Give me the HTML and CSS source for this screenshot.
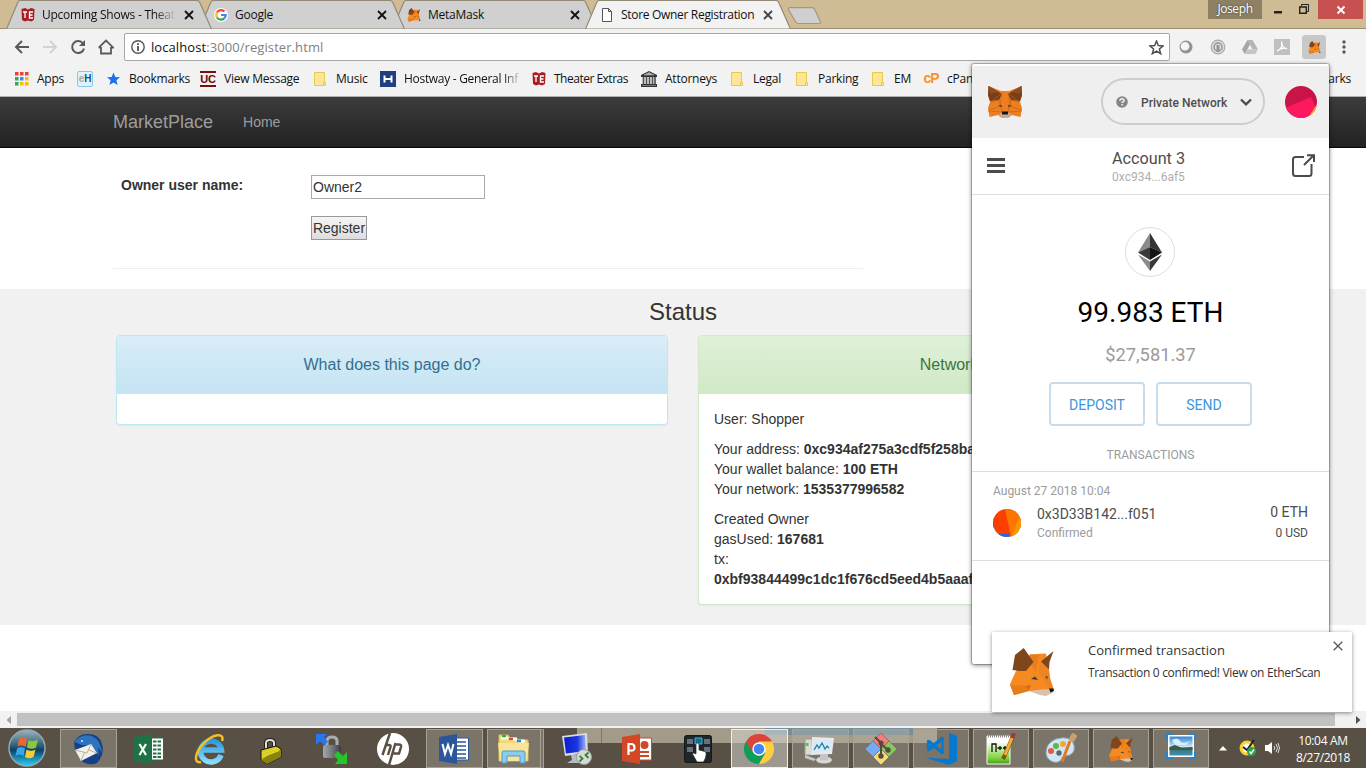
FILE: index.html
```html
<!DOCTYPE html>
<html lang="en">
<head>
<meta charset="utf-8">
<title>Store Owner Registration</title>
<link rel="stylesheet" href="styles.css">
</head>
<body>
<svg class="defs" width="0" height="0" aria-hidden="true">
  <defs>
    <linearGradient id="orb" x1="0" y1="0" x2="0" y2="1"><stop offset="0" stop-color="#9db4bd"/><stop offset=".45" stop-color="#2b5c79"/><stop offset=".55" stop-color="#0b3f66"/><stop offset="1" stop-color="#2bd0f4"/></linearGradient>
    <linearGradient id="ie" x1="0" y1="0" x2="0" y2="1"><stop offset="0" stop-color="#2a9be0"/><stop offset="1" stop-color="#8adcfb"/></linearGradient>
    <linearGradient id="sky" x1="0" y1="0" x2="0" y2="1"><stop offset="0" stop-color="#2f86d6"/><stop offset=".55" stop-color="#cfeafa"/><stop offset=".6" stop-color="#3b6f62"/><stop offset="1" stop-color="#3f91b8"/></linearGradient>
    <linearGradient id="npp" x1="0" y1="0" x2="0" y2="1"><stop offset=".2" stop-color="#fff"/><stop offset=".8" stop-color="#7bd23a"/><stop offset="1" stop-color="#3f9e18"/></linearGradient>
    <linearGradient id="scr" x1="0" y1="0" x2="1" y2="0"><stop offset="0" stop-color="#0a1fd0"/><stop offset=".6" stop-color="#1a35e0"/><stop offset="1" stop-color="#9fb6f5"/></linearGradient>
    <linearGradient id="steel" x1="0" y1="0" x2="1" y2="0"><stop offset="0" stop-color="#a5a8aa"/><stop offset=".6" stop-color="#6b6e70"/><stop offset="1" stop-color="#3a3c3e"/></linearGradient>
  </defs>
  <symbol id="tab" viewBox="0 0 206 29"><path d="M.5 29 11.5 3Q12.500 .5 14 .5H191Q193 .5 194 3L205.500 29Z"/></symbol>
  <symbol id="x" viewBox="0 0 10 10"><path d="M1 1 9 9M9 1 1 9" fill="none" stroke="currentColor" stroke-width="1.800"/></symbol>
  <symbol id="te" viewBox="0 0 14 14"><path d="M.5 1 4 0 7 1.500 10 0 13.500 1 13 12 10 13.500 7 12.500 4 13.500 1 12Z" fill="#a81e23"/><path d="M2 4H6M4 4V10M12 4H8.500V10H12M8.500 7H11.500" stroke="#fff" stroke-width="1.300" fill="none"/></symbol>
  <symbol id="folder" viewBox="0 0 12 14"><path d="M.5 .5H10.500V13.500H.5Z" fill="#ffe694" stroke="#e8c850"/><path d="M9.500 10.500h2v3h-2z" fill="#ffe694" stroke="#e8c850"/></symbol>
  <symbol id="foxside" viewBox="0 0 44 48">
    <path d="M20 6.500 36 5.500 39 22 40 30 43.500 41 34 44 19 43 4 47 0 36 6 23Z" fill="#f6891f"/>
    <path d="M20 6.500 29 6.500 26 24 19 14Z" fill="#e97d1d"/>
    <path d="M30 14 39 22 40 31 43.500 41 38 40 29 24Z" fill="#ea8522"/>
    <path d="M0 37 17 38 19 43 4 47Z" fill="#e67c1c"/>
    <path d="M15 38 21 37 19 42Z" fill="#d86c16"/>
    <path d="M13.700 0 5 7 2.500 22 9 23 16 23 23.500 14Z" fill="#80451b"/>
    <path d="M43.500 3 31 13.500 39 21.500 39.500 14Z" fill="#80451b"/>
    <path d="M19 43 32 41.500 42 41 43 44.500 36 48 30 47Z" fill="#d7c1b3"/>
    <path d="M21 31 25 28.500 28 32Z" fill="#33434d"/><path d="M35 28 37 31.500 38 28.500Z" fill="#7e4217"/><path d="M39 40.500 43.500 40.500 44 43 40.500 44.500Z" fill="#161616"/>
  </symbol>
</svg>

<div class="screen">
  <header class="tabstrip">
    <div class="tab t1"><svg class="shape"><use href="#tab"/></svg><svg class="fav"><use href="#te"/></svg><span class="title fade">Upcoming Shows - Theat</span><svg class="close"><use href="#x"/></svg></div>
    <div class="tab t2"><svg class="shape"><use href="#tab"/></svg>
      <svg class="fav" viewBox="0 0 14 14"><circle cx="7" cy="7" r="7" fill="#fff"/><g fill="none" stroke-width="2.200"><path d="M3 4.500A4.700 4.700 0 0 1 10.500 3.600" stroke="#ea4335"/><path d="M3 4.500A4.700 4.700 0 0 0 3 9.500" stroke="#fbbc05"/><path d="M3 9.500A4.700 4.700 0 0 0 10.200 10.400" stroke="#34a853"/><path d="M7 7H11.700A4.700 4.700 0 0 1 10.200 10.400" stroke="#4285f4"/></g></svg>
      <span class="title">Google</span><svg class="close"><use href="#x"/></svg></div>
    <div class="tab t3"><svg class="shape"><use href="#tab"/></svg><svg class="fav"><use href="#foxside"/></svg><span class="title">MetaMask</span><svg class="close"><use href="#x"/></svg></div>
    <div class="tab t4 active"><svg class="shape"><use href="#tab"/></svg>
      <svg class="fav" viewBox="0 0 14 14"><path d="M2.500 .5H8.500L11.500 3.500V13.500H2.500ZM8.500 .5V3.500H11.500" fill="#fff" stroke="#555"/></svg>
      <span class="title">Store Owner Registration</span><svg class="close"><use href="#x"/></svg></div>
    <svg class="newtab" viewBox="0 0 36 18"><path d="M3 .7H25Q27 .7 28 3L33.500 15Q34 16.500 32 16.500H11Q9 16.500 8 14L1.500 2.500Q1 .7 3 .7Z" fill="#cfcfcf" stroke="#a3977d" stroke-width="1.200"/></svg>
    <div class="window-controls">
      <span class="user">Joseph</span>
      <svg class="wmin" viewBox="0 0 8 3"><path d="M0 0H8V2.500H0Z" fill="#222"/></svg>
      <svg class="wmax" viewBox="0 0 10 10"><path d="M2.500 2V.5H9.500V7.500H8" fill="none" stroke="#222"/><path d="M.7 3H7.300V9.300H.7Z" fill="none" stroke="#222" stroke-width="1.400"/></svg>
      <span class="wclose"><svg viewBox="0 0 10 10"><path d="M1.500 1.500 8.500 8.500M8.500 1.500 1.500 8.500" stroke="#fff" stroke-width="1.900"/></svg></span>
    </div>
  </header>

  <div class="toolbar">
    <svg class="nav" viewBox="0 0 16 16"><path d="M15 8H2M8 2 2 8 8 14" fill="none" stroke="#5a5a5a" stroke-width="2"/></svg>
    <svg class="nav" viewBox="0 0 16 16"><path d="M1 8H14M8 2 14 8 8 14" fill="none" stroke="#d2d2d2" stroke-width="2"/></svg>
    <svg class="nav" viewBox="0 0 16 16"><path d="M13 4.500A6 6 0 1 0 14 9.500" fill="none" stroke="#5a5a5a" stroke-width="2"/><path d="M15 1V7H9Z" fill="#5a5a5a"/></svg>
    <svg class="nav" viewBox="0 0 16 16"><path d="M3 8V14.500H13V8M.7 8.700 8 1.500 15.300 8.700H13M.7 8.700H3" fill="none" stroke="#5a5a5a" stroke-width="1.800"/></svg>
    <div class="omnibox">
      <svg class="info" viewBox="0 0 14 14"><circle cx="7" cy="7" r="6.200" fill="none" stroke="#555" stroke-width="1.400"/><path d="M7 6V11M7 3.200V4.900" stroke="#444" stroke-width="1.700"/></svg>
      <span class="url"><b>localhost</b>:3000/register.html</span>
      <svg class="star" viewBox="0 0 14 14"><path d="M7 1 8.700 5.200 13.200 5.500 9.700 8.400 10.900 12.800 7 10.300 3.100 12.800 4.300 8.400 .8 5.500 5.300 5.200Z" fill="none" stroke="#505050" stroke-width="1.400"/></svg>
    </div>
    <div class="ext"><svg viewBox="0 0 16 16"><circle cx="8" cy="8" r="6.500" fill="#929292"/><circle cx="7" cy="7.300" r="4.300" fill="#f6f6f6"/></svg></div>
    <div class="ext"><svg viewBox="0 0 16 16"><circle cx="8" cy="8" r="6.800" fill="#ddd" stroke="#aaa" stroke-width="1.200"/><circle cx="8" cy="8" r="4" fill="none" stroke="#949494" stroke-width="1.500"/><path d="M8 6V13" stroke="#949494" stroke-width="3"/></svg></div>
    <div class="ext"><svg viewBox="0 0 16 16"><path d="M5.500 1H10.500L16 10.500H10.500Z" fill="#b5b5b5"/><path d="M5.500 1 8 5.500 2.800 15 0 10.500Z" fill="#a5a5a5"/><path d="M5.500 10.500H16L13.300 15H2.800Z" fill="#c4c4c4"/></svg></div>
    <div class="ext"><svg viewBox="0 0 16 16"><path d="M0 0H16V16H0Z" fill="#c0c0c0"/><path d="M3 12C8 10 9 5 7.500 3 7 6 10 10 13 9.500 10 8.500 6 9.500 3 12Z" fill="none" stroke="#fff" stroke-width="1.200"/></svg></div>
    <div class="ext on"><svg class="small"><use href="#foxside"/></svg></div>
    <svg class="kebab" viewBox="0 0 4 14"><g fill="#5a5a5a"><circle cx="2" cy="2" r="1.700"/><circle cx="2" cy="7" r="1.700"/><circle cx="2" cy="12" r="1.700"/></g></svg>
  </div>

  <nav class="bookmarks">
    <a class="bm n"><svg viewBox="0 0 14 14"><g fill="#ea4335"><path d="M0 0H3.500V3.500H0ZM5 0H8.500V3.500H5ZM10 0H13.500V3.500H10Z"/></g><path d="M0 5H3.500V8.500H0ZM0 10H3.500V13.500H0Z" fill="#34a853"/><path d="M5 5H8.500V8.500H5Z" fill="#4285f4"/><path d="M10 5H13.500V8.500H10ZM5 10H8.500V13.500H5ZM10 10H13.500V13.500H10Z" fill="#fbbc05"/></svg>Apps</a>
    <a class="bm"><i class="eh">e<b>H</b></i></a>
    <a class="bm n"><svg viewBox="0 0 14 14"><path d="M6.500 .5 8.300 5 13 5.300 9.400 8.300 10.600 13 6.500 10.400 2.400 13 3.600 8.300 0 5.300 4.700 5Z" fill="#1a73e8"/></svg>Bookmarks</a>
    <a class="bm"><i class="uc">UC</i>View Message</a>
    <a class="bm n"><svg class="f"><use href="#folder"/></svg>Music</a>
    <a class="bm"><svg viewBox="0 0 16 16"><path d="M0 0H16V16H0Z" fill="#1f3f80"/><path d="M4.500 4.500V11.500M11.500 4.500V11.500M4.500 8H11.500" stroke="#fff" stroke-width="2"/></svg><span class="fade bmfade">Hostway - General Inf</span></a>
    <a class="bm n narrow"><svg><use href="#te"/></svg>Theater Extras</a>
    <a class="bm"><svg viewBox="0 0 16 16"><path d="M8 0 16 4V6H0V4ZM0 13H16V16H0Z" fill="#333"/><path d="M2.500 6V13M5.500 6V13M8.500 6V13M11.500 6V13M14 6V13" stroke="#555" stroke-width="1.700"/><path d="M3 4H13L8 1.500ZM1 14.500H15" fill="#bbb" stroke="#999" stroke-width=".7"/></svg>Attorneys</a>
    <a class="bm n"><svg class="f"><use href="#folder"/></svg>Legal</a>
    <a class="bm n"><svg class="f"><use href="#folder"/></svg>Parking</a>
    <a class="bm n"><svg class="f"><use href="#folder"/></svg>EM</a>
    <a class="bm"><i class="cp">cP</i>cPanel</a>
    <a class="bm other">Other bookmarks</a>
  </nav>

  <main class="viewport">
    <div class="navbar"><a class="brand">MarketPlace</a><a class="home">Home</a></div>
    <form class="register">
      <label for="owner">Owner user name:</label>
      <div class="fields"><input id="owner" type="text" value="Owner2"><button type="button">Register</button></div>
    </form>
    <section class="status">
      <h3>Status</h3>
      <div class="panels">
        <article class="panel blue"><h4>What does this page do?</h4><div class="body"></div></article>
        <article class="panel green"><h4>Network Status</h4>
          <div class="body"><p>User: Shopper</p>
          <p>Your address: <b>0xc934af275a3cdf5f258ba</b><br>Your wallet balance: <b>100 ETH</b><br>Your network: <b>1535377996582</b></p>
          <p>Created Owner<br>gasUsed: <b>167681</b><br>tx:<br><b>0xbf93844499c1dc1f676cd5eed4b5aaaf</b></p></div>
        </article>
      </div>
    </section>
  </main>

  <div class="scrollbar"><svg viewBox="0 0 5 8"><path d="M5 0V8L.5 4Z" fill="#a3a3a3"/></svg><span class="thumb"></span><svg viewBox="0 0 5 8"><path d="M0 0V8L4.500 4Z" fill="#505050"/></svg></div>

  <footer class="taskbar">
    <div class="slot start"><svg width="38" height="38" viewBox="0 0 38 38"><circle cx="19" cy="19" r="18" fill="url(#orb)" stroke="#94a8ad" stroke-width="1.500"/><path d="M11 10Q15 7 19 10L17.500 18Q13.500 15 9.500 17.500Z" fill="#ef6530"/><path d="M20.500 11Q25 13 30 10.500L28 18.500Q23.500 21 19 18.500Z" fill="#8cc63f"/><path d="M9 19.500Q13 17 17 19.500L15.500 27Q11.500 24 7.500 27Z" fill="#39a8e8"/><path d="M18.500 20.500Q23 23 27.500 20.500L25.500 28Q21 30.500 17 28Z" fill="#fcc931"/></svg></div>
    <div class="slot framed"><svg width="32" height="32" viewBox="0 0 32 32"><path d="M2 9Q7 0 17 1 27 1 30 11 33 21 25 30 18 33 11 29L8 26 3 17Z" fill="#173f86"/><path d="M2 9Q9 0 20 3 29 7 30 20L26 14 27 23 22 15 23 20 18 12 10 12Z" fill="#2c74be"/><path d="M3 17 19 11 25 20 9 28Z" fill="#f3efe9"/><path d="M3 17 15 20 19 11M9 28 12.500 19.500M25 20 17 17" fill="none" stroke="#bbb0a5"/><circle cx="10" cy="8" r="1" fill="#d9ecff"/></svg></div>
    <div class="slot"><svg width="30" height="30" viewBox="0 0 30 30"><path d="M16 4H29.500V26H16Z" fill="#fff" stroke="#1f7246"/><path d="M19 7.500H27M19 11.500H27M19 15.500H27M19 19.500H27M19 23H27" stroke="#1f7246" stroke-width="2" stroke-dasharray="3.500 1"/><path d="M0 3 18 0V30L0 27Z" fill="#1f7246"/><path d="M5.500 10 12 21M12 10 5.500 21" stroke="#fff" stroke-width="2.200"/></svg></div>
    <div class="slot"><svg width="32" height="32" viewBox="0 0 32 32"><path d="M27 22A10.500 10.500 0 1 1 27.500 17H9" fill="none" stroke="url(#ie)" stroke-width="5.500"/><path d="M28 8C31-1 19 1 10 10S-1 31 7 29" fill="none" stroke="#f5be25" stroke-width="2.500"/></svg></div>
    <div class="slot"><svg width="24" height="32" viewBox="0 0 24 32"><path d="M7 16V10Q7 7 11 7T15 10V14" fill="none" stroke="#222" stroke-width="4"/><path d="M7 16V10Q7 7 11 7T15 10V14" fill="none" stroke="#ddd" stroke-width="2"/><path d="M2 17 17 13 22 16V24L8 31 2 27Z" fill="#d9cc18" stroke="#111"/><path d="M2 27 8 23 22 17V24L8 31Z" fill="#8a820f"/><path d="M3 20 20 15M3 23 20 18" stroke="#efe764" stroke-dasharray="1 1"/></svg></div>
    <div class="slot"><svg width="34" height="32" viewBox="0 0 34 32"><path d="M12 14V8Q12 4 17 4T22 8V14" fill="none" stroke="#a9adb0" stroke-width="3"/><rect x="8" y="12" width="18" height="13" rx="2" fill="url(#steel)"/><path d="M1 1H12L9 4 13 9 9 12 5 8 1 12Z" fill="#2877ee"/><path d="M32 31H20L23 27 19 22 23 18 28 23 32 19Z" fill="#25c52d"/></svg></div>
    <div class="slot"><svg width="32" height="32" viewBox="0 0 32 32"><circle cx="16" cy="16" r="16" fill="#fff"/><path d="M13 0 5.500 22M9.500 12H12Q14 12 13.500 14L11 22M18.500 10 12 32M18.500 11.500H22Q24.500 11.500 24 14L22 20.500H16.500" fill="none" stroke="#5a5145" stroke-width="2.500"/></svg></div>
    <div class="slot framed"><svg width="30" height="30" viewBox="0 0 30 30"><path d="M16 4H29.500V26H16Z" fill="#fff" stroke="#2b579a"/><path d="M18 8H27M18 12H27M18 16H27M18 20H27M18 24H27" stroke="#2b579a" stroke-width="1.500"/><path d="M0 3 18 0V30L0 27Z" fill="#2b579a"/><path d="M3.500 10 6 20 9 11 12 20 14.500 10" fill="none" stroke="#fff" stroke-width="2"/></svg></div>
    <div class="slot framed stack"><svg width="33" height="30" viewBox="0 0 33 30"><path d="M2 5V1H11L13 4H20V6H31V27H2Z" fill="#f3d978" stroke="#ddb950"/><path d="M4 4H11M12 5H20M21 7H28" stroke="#fff" stroke-width="3"/><path d="M5 2H9" stroke="#26b43a" stroke-width="2.500"/><path d="M12 5H16" stroke="#dc4934" stroke-width="2.500"/><path d="M20 7H24" stroke="#2a87d9" stroke-width="2.500"/><path d="M1 9H32L30 27H3Z" fill="#f8e59b"/><path d="M5 29V18Q5 17 7 17H26Q28 17 28 19V29H23V22H10V29Z" fill="#8ccbea" stroke="#4a9bc5"/></svg></div>
    <div class="slot"><svg width="32" height="32" viewBox="0 0 32 32"><path d="M2 3 27 0 28 20 5 23Z" fill="#d8dde3"/><path d="M4 4.500 25 2 26 18 6 20.500Z" fill="url(#scr)"/><path d="M11 22H20V27L24 30H7L12 27Z" fill="#b8bcc0"/><circle cx="24" cy="24" r="7.500" fill="#d5d9d8" stroke="#9a9e9c"/><path d="M19.500 23 22.500 25.500 19.500 28.500M28.500 19.500 25.500 22 28.500 25" fill="none" stroke="#318b22" stroke-width="1.800"/></svg></div>
    <div class="slot"><svg width="30" height="30" viewBox="0 0 30 30"><path d="M16 4H29.500V26H16Z" fill="#fff" stroke="#d24726"/><circle cx="22.500" cy="11" r="4" fill="#d24726"/><path d="M18 18H27M18 22H27" stroke="#d24726" stroke-width="2"/><path d="M0 3 18 0V30L0 27Z" fill="#d24726"/><path d="M6.500 21V10H9Q12.500 10 12.500 13.500T9 16.500H6.500" fill="none" stroke="#fff" stroke-width="2.200"/></svg></div>
    <div class="slot"><svg width="28" height="30" viewBox="0 0 28 30"><rect x=".5" y="1.500" width="27" height="27" rx="2" fill="#20252a" stroke="#15191c"/><path d="M3 5H9V10H3ZM3 13H9V18H3ZM20 5H26V10H20ZM20 13H26V18H20Z" fill="#66727b"/><path d="M11 4H18V10H11Z" fill="#176b91" stroke="#40b5d7"/><path d="M12 10Q13.500 8 15 10V16L21 17.500Q23 18 21.500 24L19.500 28H13L8.500 20Q9.500 18 12 20Z" fill="#fff" stroke="#222" stroke-width=".7"/></svg></div>
    <div class="slot framed hot"><svg width="30" height="30" viewBox="0 0 30 30"><path d="M15 15 2 7.500A15 15 0 0 1 28 7.500Z" fill="#db4437"/><path d="M15 15 2 7.500A15 15 0 0 0 15 30L21.500 18.700Z" fill="#0f9d58"/><path d="M15 15 21.500 18.700 15 30A15 15 0 0 0 28 7.500H15Z" fill="#ffcd40"/><path d="M2 7.500 8 18 15 7.500Z" fill="#db4437"/><circle cx="15" cy="15" r="6.700" fill="#fff"/><circle cx="15" cy="15" r="5.300" fill="#4285f4"/></svg></div>
    <div class="slot framed"><svg width="32" height="30" viewBox="0 0 32 30"><path d="M1 5H8V21H1Z" fill="#dbdbd6" stroke="#999"/><path d="M3 9V12" stroke="#4ad12b" stroke-width="3"/><path d="M8 3 30 4 28 20 7 21Z" fill="#e8e9eb"/><path d="M10 5 27 6 26 18 9 19Z" fill="#d6eaf7"/><path d="M10 16 13 11 15 14 18 9 21 15 23 12 25 14" fill="none" stroke="#287ba7" stroke-width="1.300"/><path d="M1 21 12 25 10 27 1 24Z" fill="#c8c8c4"/><ellipse cx="20" cy="26" rx="8" ry="3.500" fill="#d6d6d4"/><path d="M16 20H24V26H16Z" fill="#c4c4c2"/></svg></div>
    <div class="slot framed"><svg width="34" height="34" viewBox="0 0 34 34"><g stroke="#777064" stroke-width=".8"><path d="M17 1 25 9 17 17 9 9Z" fill="#f87a79"/><path d="M9 9 17 17 9 25 1 17Z" fill="#75aaf4"/><path d="M25 9 33 17 25 25 17 17Z" fill="#86cb5a"/><path d="M17 17 25 25 17 33 9 25Z" fill="#f6da76"/></g><path d="M11 5 17 11V24M17 12 24 18" fill="none" stroke="#524c42" stroke-width="2"/><g fill="#524c42"><circle cx="17" cy="11" r="2.500"/><circle cx="17" cy="24" r="2.700"/><circle cx="24" cy="18" r="2.700"/></g></svg></div>
    <div class="slot framed"><svg width="32" height="32" viewBox="0 0 32 32"><path d="M24 0 32 3V28L24 32 0 24.500 24 26Z" fill="#0878cc"/><path d="M3 8 18 20M3 17 18 5" stroke="#0878cc" stroke-width="3.600"/><path d="M3 7V18M17.500 4V21" stroke="#0878cc" stroke-width="2.200"/></svg></div>
    <div class="slot framed"><svg width="32" height="32" viewBox="0 0 32 32"><path d="M2 3H25V31H2Z" fill="url(#npp)" stroke="#f7f7f7"/><path d="M3 3H24" stroke="#888" stroke-width="3" stroke-dasharray="1 1"/><path d="M7 19V11H11V19M12.500 15H17M15 13V17M18 15H22.500M20 13V17" fill="none" stroke="#111" stroke-width="1.300"/><path d="M28 3 20 22 18 26" stroke="#805315" stroke-width="4"/><path d="M27.500 4 20 22" stroke="#efb034" stroke-width="3"/><path d="M29 0 27 5" stroke="#a63737" stroke-width="4"/></svg></div>
    <div class="slot framed"><svg width="32" height="32" viewBox="0 0 32 32"><path d="M1 20Q1 10 11 6 26 2 29 12 31 22 20 23 17 23 16 27 12 31 6 28 1 25 1 20Z" fill="#d3e5f0" stroke="#8eabbf"/><circle cx="6" cy="18" r="3" fill="#e35a4b"/><circle cx="11" cy="13" r="3" fill="#5bb64b"/><circle cx="18" cy="11" r="3" fill="#f0a934"/><circle cx="14" cy="20" r="2.700" fill="#52697b"/><path d="M25 8 17 29" stroke="#d97b25" stroke-width="3"/><path d="M30 1 26 8" stroke="#c6a072" stroke-width="6"/></svg></div>
    <div class="slot framed"><svg width="24" height="26"><use href="#foxside"/></svg></div>
    <div class="slot framed photo"><svg width="30" height="26" viewBox="0 0 30 26"><path d="M0 0H7V3H3V7H0ZM23 0H30V7H27V3H23ZM0 19H3V23H7V26H0ZM27 19H30V26H23V23H27Z" fill="#2683cc"/><path d="M2 2H28V24H2Z" fill="#fff"/><path d="M3.500 3.500H26.500V22.500H3.500Z" fill="url(#sky)"/><path d="M6 7Q12 4 14 8T24 8L20 12H9Z" fill="#d9effc"/><path d="M3.500 14 9 12 16 15 26.500 14V17H3.500Z" fill="#355f4c"/></svg></div>
    <div class="tray">
      <svg width="8" height="5" viewBox="0 0 8 5"><path d="M4 0 8 4.500H0Z" fill="#fff"/></svg>
      <svg width="18" height="18" viewBox="0 0 18 18"><circle cx="8" cy="9" r="6" fill="#fff" stroke="#f8d32c" stroke-width="3"/><path d="M4 8 8 11 15 1" fill="none" stroke="#222" stroke-width="2"/><circle cx="12.500" cy="12.500" r="4.500" fill="#2aa24a"/><path d="M10.500 12.500 12 14.500 15 10.500" fill="none" stroke="#fff" stroke-width="1.500"/></svg>
      <svg width="16" height="14" viewBox="0 0 16 14"><path d="M1 4H4L8 1V13L4 10H1Z" fill="#fff"/><path d="M10 5Q11.500 7 10 9M12 3Q15 7 12 11M14 2Q17 7 14 12" fill="none" stroke="#ddd"/></svg>
      <div class="clock"><span>10:04 AM</span><span>8/27/2018</span></div>
    </div>
  </footer>

  <aside class="popup">
    <div class="pop-head">
      <svg class="fox" viewBox="0 0 34 32"><path d="M.5 0 13 5H21L33.500 0 34 10 32 16 34 22 32.500 31 24 29 20 32H14L10 29 1.500 31 0 22 2 16 0 10Z" fill="#ee7f20"/><path d="M.5 0 14 8 11 14 2 15 0 9ZM33.500 0 20 8 23 14 32 15 34 9Z" fill="#763e1a"/><path d="M.5 0 2 8 11 6ZM33.500 0 32 8 23 6Z" fill="#8f4c1f"/><path d="M3 16 11 14 13 20 1 24M31 16 23 14 21 20 33 24M14 7 12 17 14 26M20 7 22 17 20 26M0 25 14 26M34 25 20 26M3 16 14 7M31 16 20 7" fill="none" stroke="#c46417" stroke-width=".7"/><path d="M10 19 14 19 13.500 21.500ZM24 19 20 19 20.500 21.500Z" fill="#3f4d55"/><path d="M11 28 15 26H19L23 28 20 32H14Z" fill="#c0ad9e"/><path d="M14 25.500H20L20 28.500H14Z" fill="#161616"/></svg>
      <div class="network"><svg viewBox="0 0 12 12"><circle cx="6" cy="6" r="5.800" fill="#858588"/><path d="M4 4.700Q4 2.800 6 2.800T8 4.500Q8 5.500 6.200 6.400V7.100M6.200 8.100V9.500" fill="none" stroke="#eee" stroke-width="1.600"/></svg><span>Private Network</span><svg class="chev" viewBox="0 0 12 8"><path d="M1 1.500 6 6.300 11 1.500" fill="none" stroke="#4d4d4d" stroke-width="2.400"/></svg></div>
      <svg class="avatar" viewBox="0 0 32 32"><clipPath id="a"><circle cx="16" cy="16" r="16"/></clipPath><g clip-path="url(#a)"><path d="M0 0H32V32H0Z" fill="#c81446"/><path d="M0 22 26 11 35 32 0 34Z" fill="#fc1960"/><path d="M32 18 23 32H34Z" fill="#f5b900"/></g></svg>
    </div>
    <div class="account">
      <svg class="burger" viewBox="0 0 18 15"><path d="M0 1.500H18M0 7.500H18M0 13.500H18" stroke="#4b4b4b" stroke-width="3"/></svg>
      <div class="who"><strong>Account 3</strong><small>0xc934...6af5</small></div>
      <svg class="open" viewBox="0 0 23 23"><path d="M12 3H3.500Q1 3 1 5.500V19.500Q1 22 3.500 22H17Q19.500 22 19.500 19.500V10" fill="none" stroke="#4b4b4b" stroke-width="2"/><path d="M12 11 21 2M15 1.300H22V8" fill="none" stroke="#4b4b4b" stroke-width="2"/></svg>
    </div>
    <div class="balance">
      <div class="eth"><svg viewBox="0 0 24 38"><path d="M12 0V14L0 19.500Z" fill="#8b8b8b"/><path d="M12 0V14L24 19.500Z" fill="#343434"/><path d="M12 14V27L0 19.500Z" fill="#393939"/><path d="M12 14V27L24 19.500Z" fill="#151515"/><path d="M0 21.500 12 28.500V38Z" fill="#8b8b8b"/><path d="M24 21.500 12 28.500V38Z" fill="#393939"/></svg></div>
      <div class="amount">99.983 ETH</div><div class="fiat">$27,581.37</div>
      <div class="actions"><span>DEPOSIT</span><span>SEND</span></div>
      <div class="heading">TRANSACTIONS</div>
    </div>
    <div class="tx">
      <div class="date">August 27 2018 10:04</div>
      <div class="tx-row">
        <svg viewBox="0 0 28 28"><clipPath id="c"><circle cx="14" cy="14" r="14"/></clipPath><g clip-path="url(#c)"><path d="M0 0H28V28H0Z" fill="#fb3f00"/><path d="M12 0H28V28H18Z" fill="#fc7500"/><path d="M28 5 18 28H28Z" fill="#f49a00"/><path d="M0 6 2 25 17 25 16 28H0Z" fill="#2c66e5"/></g></svg>
        <div class="to"><span>0x3D33B142...f051</span><small>Confirmed</small></div>
        <div class="value"><span>0 ETH</span><small>0 USD</small></div>
      </div>
    </div>
  </aside>

  <aside class="toast">
    <svg class="toast-fox"><use href="#foxside"/></svg>
    <div class="msg"><strong>Confirmed transaction</strong><span>Transaction 0 confirmed! View on EtherScan</span></div>
    <svg class="toast-x" viewBox="0 0 10 10"><path d="M.7 .7 9.300 9.300M9.300 .7 .7 9.300" stroke="#555" stroke-width="1.300"/></svg>
  </aside>
</div>
</body>
</html>
```
FILE: styles.css
```css
* { box-sizing: border-box; }
body { margin: 0; overflow: hidden; }
.defs { position: absolute; }
svg { display: block; flex: none; }
.screen {
  position: relative;
  width: 1366px;
  height: 768px;
  display: flex;
  flex-direction: column;
  font: 12px "Open Sans", "Noto Sans", sans-serif;
  color: #111;
  overflow: hidden;
  background: #fff;
}

/* Tab strip */
.tabstrip { height: 29px; display: flex; padding-left: 6px; background: #cfbb94; border-bottom: 1px solid #9b8c70; flex: none; }
.tab { position: relative; width: 193px; height: 29px; display: flex; align-items: center; padding-left: 15px; flex: none; }
.shape { position: absolute; left: 0; top: 0; width: 206px; height: 29px; fill: #d0d0d0; stroke: #938a76; stroke-width: 1.2; }
.t1 { z-index: 3; }
.t2 { z-index: 2; }
.t3 { z-index: 1; }
.tab.active { z-index: 4; }
.active .shape { fill: #f2f2f2; }
.fav, .title, .close { position: relative; }
.fav { width: 14px; height: 14px; }
.title { width: 136px; margin-left: 7px; white-space: nowrap; overflow: hidden; letter-spacing: -.24px; line-height: 18px; }
.active .title { letter-spacing: -.31px; }
.fade { -webkit-mask-image: linear-gradient(90deg, #000 84%, transparent); mask-image: linear-gradient(90deg, #000 84%, transparent); }
.t1 .title { width: 134px; margin-right: 2px; }
.close { width: 10px; height: 10px; margin-left: 6px; color: #111; }
.active .close { color: #444; }
.newtab { width: 36px; height: 18px; margin: 7px 0 0 9px; }
.window-controls { display: flex; margin-left: auto; padding-right: 3px; align-items: flex-start; }
.user { width: 54px; height: 19px; line-height: 18px; text-align: center; background: #8e8063; color: #fff; letter-spacing: -.4px; text-shadow: 0 0 2px #333; }
.wmin { width: 8px; height: 3px; margin: 11px 17px 0 12px; }
.wmax { width: 10px; height: 10px; margin: 4px 9px 0 0; }
.wclose { width: 45px; height: 19px; background: #c75050; display: grid; place-items: center; }
.wclose svg { width: 10px; height: 10px; }

/* Toolbar */
.toolbar { height: 35px; flex: none; display: flex; align-items: center; background: #f2f2f2; padding-left: 14px; padding-top: 1px; }
.nav { width: 16px; height: 16px; margin-right: 12px; }
.omnibox { width: 1046px; height: 28px; margin-left: -2px; border: 1px solid #a6a6a6; border-radius: 2px; background: #fff; display: flex; align-items: center; padding: 0 5px 0 6px; margin-right: 4px; }
.info { width: 14px; height: 14px; }
.url { margin-left: 6px; font-size: 13px; color: #808080; letter-spacing: .08px; }
.url b { font-weight: 400; color: #111; }
.star { width: 15px; height: 15px; margin-left: auto; }
.ext { width: 24px; height: 24px; margin-right: 8px; display: grid; place-items: center; flex: none; }
.ext svg { width: 16px; height: 16px; }
.ext.on { background: #c8c8c8; border-radius: 3px; }
.ext .small { width: 13px; height: 13px; }
.kebab { width: 4px; height: 14px; margin-left: 8px; }

/* Bookmarks */
.bookmarks { height: 33px; flex: none; display: grid; grid-template-columns: 62px 30px 93px 114px 66px 152px 109px 90px 65px 76px 51px 320px 108px; padding: 0 0 3px 15px; align-items: center; background: #f2f2f2; border-bottom: 1px solid #b0b0b0; letter-spacing: -.24px; }
.bm { display: flex; align-items: center; gap: 8px; white-space: nowrap; }
.bm > svg { width: 16px; height: 16px; }
.bm.n > svg { width: 14px; height: 14px; }
.bm > svg.f { width: 12px; margin-right: 2px; }
.bmfade { width: 118px; letter-spacing: -.3px; }
.bm.narrow { letter-spacing: -.5px; }
.bm i { width: 16px; height: 16px; font: 700 10px/15px "Liberation Sans", sans-serif; text-align: center; }
.eh { border: 1px solid #86c7ee; border-radius: 2px; background: #e0f2fd; color: #aaa; line-height: 13px !important; }
.eh b { color: #17527f; }
.uc { border-top: 2px solid #800b0b; border-bottom: 2px solid #800b0b; color: #6b0c0c; font-size: 11px !important; line-height: 12px !important; }
.cp { color: #f79428; font-size: 14px !important; letter-spacing: -1px; }
.other { justify-content: flex-end; }

/* Web page */
.viewport { height: 614px; flex: none; background: #fff; font: 14px/20px "Liberation Sans", Arial, sans-serif; color: #333; }
.navbar { height: 51px; background: linear-gradient(#3c3c3c, #222); border-bottom: 1px solid #080808; padding-left: 113px; display: flex; align-items: center; color: #9d9d9d; gap: 30px; }
.brand { font-size: 18px; }
.register { margin-left: 113px; width: 750px; height: 121px; display: flex; padding: 27px 0 0 8px; border-bottom: 1px solid #eee; }
.register label { width: 190px; font-weight: 700; }
.fields { display: flex; flex-direction: column; align-items: flex-start; gap: 17px; }
.fields input { width: 174px; height: 24px; border: 1px solid #a9a9a9; padding: 1px; font: inherit; color: #333; }
.fields button { width: 56px; height: 24px; padding: 0; border: 1px solid #999; background: linear-gradient(#f5f5f5, #ddd); font: inherit; color: #333; }
.status { margin-top: 20px; height: 336px; background: #f1f1f1; padding: 10px 116px 0; }
.status h3 { margin: 0 0 10px; font-size: 24px; line-height: 26px; font-weight: 400; text-align: center; }
.panels { display: grid; grid-template-columns: 552px 552px; gap: 30px; align-items: start; }
.panel { border: 1px solid #bce8f1; border-radius: 4px; background: #fff; box-shadow: 0 1px 2px rgba(0, 0, 0, .05); overflow: hidden; }
.panel h4 { margin: 0; height: 58px; line-height: 58px; font-size: 16px; font-weight: 400; text-align: center; }
.blue h4 { background: linear-gradient(#d9edf7, #c4e3f3); color: #31708f; }
.green { border-color: #d0e9c6; }
.green h4 { background: linear-gradient(#dff0d8, #d0e9c6); color: #3c763d; }
.body { padding: 15px 15px 5px; }
.blue .body { padding: 15px; }
.body p { margin: 0 0 10px; white-space: nowrap; }

/* Horizontal scrollbar */
.scrollbar { height: 17px; flex: none; background: #f1f1f1; display: flex; align-items: center; padding: 0 5px 0 6px; }
.scrollbar svg { width: 5px; height: 8px; }
.thumb { width: 1318px; height: 13px; margin: 0 auto 0 6px; background: #c1c1c1; }

/* Taskbar */
.taskbar { height: 40px; flex: none; display: grid; grid-template-columns: 58px repeat(13, 61px) repeat(6, 60px) 1fr; background: linear-gradient(90deg, transparent 577px, #a39b8a 577px, #a39b8a 601px, #80786a 601px, #80786a 602px, #a39b8a 602px, #a39b8a 765px, transparent 765px) 0 0 / 100% 15px no-repeat, linear-gradient(90deg, transparent 765px, #76909a 765px, #76909a 913px, transparent 913px) 0 0 / 100% 7px no-repeat, linear-gradient(90deg, transparent 765px, #a39b8a 765px, #a39b8a 937px, transparent 937px) 0 0 / 100% 15px no-repeat, #585044; }
.slot { height: 39px; margin: 1px 2px 0; padding-right: 1px; display: grid; place-items: center; }
.slot.start { padding-right: 4px; margin: 0; }
.framed { border: 1px solid #a8a296; background: rgba(185, 180, 170, .36); }
.stack { border-right: 4px double #a8a296; }
.photo { padding-bottom: 5px; }
.hot { border-color: #eee; background: rgba(215, 212, 208, .55); }
.tray { display: flex; align-items: center; color: #fff; padding-left: 8px; }
.tray > svg { margin-right: 12px; }
.tray > svg:nth-child(2) { margin-right: 7px; }
.tray > svg:nth-child(3) { margin-right: 13px; }
.clock { display: flex; flex-direction: column; text-align: center; width: 60px; line-height: 17px; letter-spacing: -.3px; padding-top: 1px; }

/* Wallet popup */
.popup { position: absolute; left: 972px; top: 64px; width: 357px; height: 600px; background: #fff; border-radius: 2px; box-shadow: 0 0 0 1px rgba(0, 0, 0, .2), 0 1px 5px rgba(0, 0, 0, .55); font-family: Roboto, sans-serif; color: #4d4d4d; }
.pop-head { height: 72px; margin-top: 2px; background: #efefef; display: flex; align-items: center; padding: 0 12px 1px 16px; }
.fox { width: 34px; height: 32px; }
.network { width: 164px; height: 47px; border: 2px solid #cdcdcd; border-radius: 24px; margin: 0 20px 0 79px; display: flex; align-items: center; padding: 0 11px 0 13px; font-size: 12px; font-weight: 500; letter-spacing: .03px; }
.network svg { width: 12px; height: 12px; }
.network span { margin-left: 13px; margin-right: auto; padding-top: 2px; }
.network .chev { width: 12px; height: 8px; }
.avatar { width: 32px; height: 32px; }
.account { height: 57px; border-bottom: 1px solid #dedede; display: flex; align-items: center; justify-content: space-between; padding: 0 14px 1px 15px; }
.burger { width: 18px; height: 15px; }
.open { width: 23px; height: 23px; }
.who { display: flex; flex-direction: column; align-items: center; padding-top: 2px; }
.who strong { font-weight: 400; font-size: 16.2px; line-height: 20px; }
.who small { font-size: 12px; line-height: 16px; color: #aeaeae; }
.balance { height: 277px; border-bottom: 1px solid #dedede; display: flex; flex-direction: column; align-items: center; padding-top: 32px; }
.eth { width: 50px; height: 50px; margin-right: 1px; border: 1px solid #dedede; border-radius: 50%; display: grid; place-items: center; }
.eth svg { width: 24px; height: 38px; }
.amount { font-size: 28px; line-height: 34px; margin-top: 19px; color: #000; }
.fiat { font-size: 18.3px; line-height: 22px; color: #9b9b9b; margin-top: 14px; }
.actions { display: flex; gap: 11px; margin: 16px 0 0 0; }
.actions span { width: 96px; height: 44px; border: 2px solid #c7ddec; border-radius: 4px; text-align: center; line-height: 42px; font-size: 14px; color: #3b95df; }
.heading { font-size: 12px; line-height: 16px; color: #9b9b9b; margin-top: 21px; }
.tx { height: 89px; border-bottom: 1px solid #dedede; padding: 11px 21px 0; }
.date { font-size: 12px; line-height: 16px; color: #9b9b9b; }
.tx-row { display: flex; margin-top: 4px; }
.tx-row > svg { width: 28px; height: 28px; margin: 6px 16px 0 0; }
.to, .value { display: flex; flex-direction: column; line-height: 19px; font-size: 14px; }
.to { padding-top: 2px; }
.to small { font-size: 12px; color: #9b9b9b; }
.value { margin-left: auto; text-align: right; line-height: 21px; margin-top: -1px; }
.value small { font-size: 12px; }

/* Notification */
.toast { position: absolute; left: 992px; top: 632px; width: 360px; height: 80px; background: #fff; box-shadow: 0 1px 4px rgba(0, 0, 0, .45); display: flex; padding: 9px 9px 0 18px; }
.toast-fox { width: 44px; height: 48px; margin-top: 7px; }
.msg { display: flex; flex-direction: column; margin-left: 34px; color: #333; white-space: nowrap; }
.msg strong { font-weight: 400; font-size: 13px; line-height: 19px; letter-spacing: .04px; }
.msg span { font-size: 12px; line-height: 26px; letter-spacing: -.32px; }
.toast-x { width: 10px; height: 10px; margin-left: auto; }
```
